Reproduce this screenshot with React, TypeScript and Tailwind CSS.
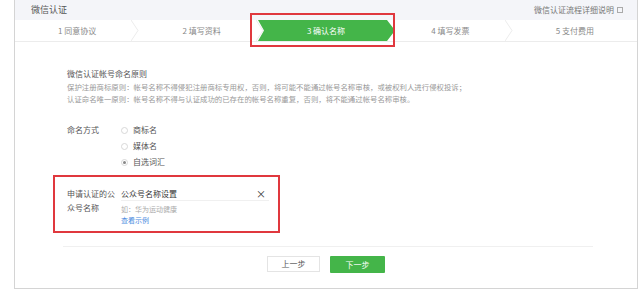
import React from 'react';

const steps = ['1 同意协议', '2 填写资料', '3 确认名称', '4 填写发票', '5 支付费用'];

function Sep() {
  return (
    <svg className="absolute right-0 top-0 h-full w-[8px]" viewBox="0 0 8 22" preserveAspectRatio="none">
      <path d="M0 0 L7 11 L0 22" fill="none" stroke="#ececec" strokeWidth="1" />
    </svg>
  );
}

function Radio({ checked, label }: { checked?: boolean; label: string }) {
  return (
    <div className="flex h-[16px] items-center gap-[5px]">
      <span className="flex h-[7px] w-[7px] items-center justify-center rounded-full border border-[#d8d8d8] bg-white">
        {checked && <span className="h-[3px] w-[3px] rounded-full bg-[#888]" />}
      </span>
      <span className="text-[#555]">{label}</span>
    </div>
  );
}

export default function App() {
  return (
    <div
      className="h-[294px] w-[640px] bg-white"
      style={{ fontFamily: '"Noto Sans CJK SC", "Noto Sans", sans-serif' }}
    >
      <div className="ml-[14px] flex h-[289px] w-[624px] flex-col border-x border-b border-[#d4d4d4] text-[8px]">
        {/* header */}
        <div className="flex h-[20px] items-center justify-between bg-[#f4f5f9] pl-[16px] pr-[14px]">
          <span className="text-[9px] text-[#555]">微信认证</span>
          <span className="flex items-center gap-[3px] text-[#777]">
            微信认证流程详细说明
            <span className="h-[6px] w-[6px] border border-[#aaa]" />
          </span>
        </div>

        {/* steps */}
        <div className="flex h-[22px] border-b border-[#ececec] text-[#888]">
          {steps.map((s, i) => (
            <div key={s} className="relative flex flex-1 items-center justify-center">
              {i === 2 ? (
                <>
                  <svg className="absolute left-[-6px] top-0 h-[21px] w-[137px]" viewBox="0 0 137 21" preserveAspectRatio="none">
                    <path d="M0 0 L129 0 L137 10.5 L129 21 L0 21 L6 10.5 Z" fill="#44b549" />
                  </svg>
                  <span className="relative text-white">{s}</span>
                  <div className="absolute left-[-14px] top-[-7px] h-[34px] w-[145px] border-2 border-[#e0383e]" />
                </>
              ) : (
                <>
                  <span>{s}</span>
                  {i !== 4 && <Sep />}
                </>
              )}
            </div>
          ))}
        </div>

        {/* body */}
        <div className="flex flex-1 flex-col pl-[52px] pt-[26px]">
          <div className="text-[#555]">微信认证帐号命名原则</div>
          <div className="mt-[1px] text-[7.4px] leading-[12px] text-[#999]">
            <div>保护注册商标原则：帐号名称不得侵犯注册商标专用权，否则，将可能不能通过帐号名称审核，或被权利人进行侵权投诉；</div>
            <div>认证命名唯一原则：帐号名称不得与认证成功的已存在的帐号名称重复，否则，将不能通过帐号名称审核。</div>
          </div>

          <div className="mt-[17px] flex">
            <div className="w-[54px] leading-[16px] text-[#555]">命名方式</div>
            <div className="flex flex-col">
              <Radio label="商标名" />
              <Radio label="媒体名" />
              <Radio checked label="自选词汇" />
            </div>
          </div>

          <div className="ml-[-14px] mt-[5px] flex h-[58px] w-[227px] border-2 border-[#e0383e] pl-[12px] pt-[10px]">
            <div className="w-[54px] leading-[14px] text-[#555]">
              申请认证的公
              <br />
              众号名称
            </div>
            <div className="flex flex-col">
              <div className="flex h-[14px] w-[148px] items-center justify-between border-b border-[#f0f0f0] pr-[3px]">
                <span className="text-[#333]">公众号名称设置</span>
                <span className="text-[10px] text-[#333]">×</span>
              </div>
              <div className="mt-[3px] text-[7px] leading-[11px] text-[#aaa]">如：华为运动健康</div>
              <div className="text-[7px] leading-[10px] text-[#4a8be0]">查看示例</div>
            </div>
          </div>

          <div className="ml-[-4px] mt-[13px] h-px w-[530px] bg-[#f0f0f0]" />

          <div className="ml-[200px] mt-[9px] flex gap-[10px]">
            <div className="flex h-[16px] w-[53px] items-center justify-center border border-[#e4e4e4] bg-white text-[#555]">
              上一步
            </div>
            <div className="flex h-[17px] w-[55px] items-center justify-center rounded-[1px] bg-[#44b549] text-white">
              下一步
            </div>
          </div>
        </div>
      </div>
    </div>
  );
}
